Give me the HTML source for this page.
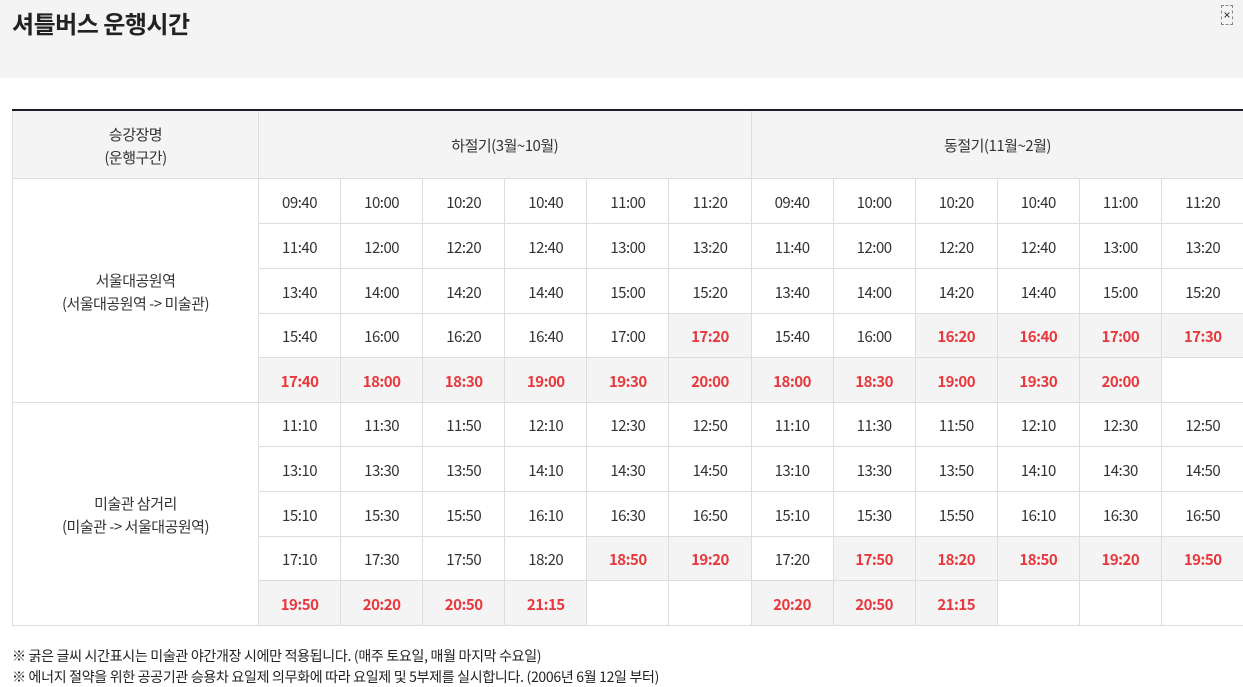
<!DOCTYPE html>
<html><head><meta charset="utf-8"><style>
body{margin:0;width:1243px;height:687px;overflow:hidden;background:#fff;font-family:"Liberation Sans","Noto Sans CJK KR",sans-serif;color:#333;}
.hd{position:absolute;left:0;top:0;width:1243px;height:78px;background:#f4f4f4;}
.hd h1{position:absolute;left:12px;top:5px;margin:0;font-size:24px;font-weight:bold;color:#222;font-family:"Noto Sans CJK KR",sans-serif;letter-spacing:-0.5px;}
.x{position:absolute;left:1221px;top:5px;width:12px;height:20px;border:1px dashed #888;box-sizing:border-box;font-size:12px;line-height:18px;text-align:center;color:#222;}
table{position:absolute;left:12px;top:109px;width:1231px;border-collapse:collapse;table-layout:fixed;border-top:2px solid #1a1f2b;border-left:1px solid #ddd;font-family:"Noto Sans CJK KR",sans-serif;}
td,th{border:1px solid #ddd;text-align:center;font-size:15px;font-weight:normal;padding:3px 0 0 0;letter-spacing:-0.5px;}
th{background:#f4f4f4;line-height:23px;}
tr.h{height:68px}
tr{height:45px}
tr.s{height:44px}
.r{background:#f4f4f4;color:#e8383d;font-weight:bold;}
.d{border-left:1px solid #bbb;}
td:last-child,th:last-child{border-right:none;}
.n{position:absolute;left:12px;font-size:14px;color:#222;font-family:"Noto Sans CJK KR",sans-serif;letter-spacing:-0.3px;}
</style></head><body>
<div class="hd"><h1>셔틀버스 운행시간</h1><div class="x">×</div></div>
<table>
<colgroup><col style="width:246px"><col span="12" style="width:82.08px"></colgroup>
<tr class="h"><th>승강장명<br>(운행구간)</th><th colspan="6">하절기(3월~10월)</th><th colspan="6" class="d">동절기(11월~2월)</th></tr>
<tr><td rowspan="5" style="line-height:23px">서울대공원역<br>(서울대공원역 -&gt; 미술관)</td><td>09:40</td><td>10:00</td><td>10:20</td><td>10:40</td><td>11:00</td><td>11:20</td><td class="d">09:40</td><td>10:00</td><td>10:20</td><td>10:40</td><td>11:00</td><td>11:20</td></tr>
<tr><td>11:40</td><td>12:00</td><td>12:20</td><td>12:40</td><td>13:00</td><td>13:20</td><td class="d">11:40</td><td>12:00</td><td>12:20</td><td>12:40</td><td>13:00</td><td>13:20</td></tr>
<tr><td>13:40</td><td>14:00</td><td>14:20</td><td>14:40</td><td>15:00</td><td>15:20</td><td class="d">13:40</td><td>14:00</td><td>14:20</td><td>14:40</td><td>15:00</td><td>15:20</td></tr>
<tr class="s"><td>15:40</td><td>16:00</td><td>16:20</td><td>16:40</td><td>17:00</td><td class="r">17:20</td><td class="d">15:40</td><td>16:00</td><td class="r">16:20</td><td class="r">16:40</td><td class="r">17:00</td><td class="r">17:30</td></tr>
<tr><td class="r">17:40</td><td class="r">18:00</td><td class="r">18:30</td><td class="r">19:00</td><td class="r">19:30</td><td class="r">20:00</td><td class="r d">18:00</td><td class="r">18:30</td><td class="r">19:00</td><td class="r">19:30</td><td class="r">20:00</td><td></td></tr>
<tr class="s"><td rowspan="5" style="line-height:23px">미술관 삼거리<br>(미술관 -&gt; 서울대공원역)</td><td>11:10</td><td>11:30</td><td>11:50</td><td>12:10</td><td>12:30</td><td>12:50</td><td class="d">11:10</td><td>11:30</td><td>11:50</td><td>12:10</td><td>12:30</td><td>12:50</td></tr>
<tr><td>13:10</td><td>13:30</td><td>13:50</td><td>14:10</td><td>14:30</td><td>14:50</td><td class="d">13:10</td><td>13:30</td><td>13:50</td><td>14:10</td><td>14:30</td><td>14:50</td></tr>
<tr><td>15:10</td><td>15:30</td><td>15:50</td><td>16:10</td><td>16:30</td><td>16:50</td><td class="d">15:10</td><td>15:30</td><td>15:50</td><td>16:10</td><td>16:30</td><td>16:50</td></tr>
<tr class="s"><td>17:10</td><td>17:30</td><td>17:50</td><td>18:20</td><td class="r">18:50</td><td class="r">19:20</td><td class="d">17:20</td><td class="r">17:50</td><td class="r">18:20</td><td class="r">18:50</td><td class="r">19:20</td><td class="r">19:50</td></tr>
<tr><td class="r">19:50</td><td class="r">20:20</td><td class="r">20:50</td><td class="r">21:15</td><td></td><td></td><td class="r d">20:20</td><td class="r">20:50</td><td class="r">21:15</td><td></td><td></td><td></td></tr>
</table>
<div class="n" style="top:646px">※ 굵은 글씨 시간표시는 미술관 야간개장 시에만 적용됩니다. (매주 토요일, 매월 마지막 수요일)</div>
<div class="n" style="top:667px">※ 에너지 절약을 위한 공공기관 승용차 요일제 의무화에 따라 요일제 및 5부제를 실시합니다. (2006년 6월 12일 부터)</div>
</body></html>
